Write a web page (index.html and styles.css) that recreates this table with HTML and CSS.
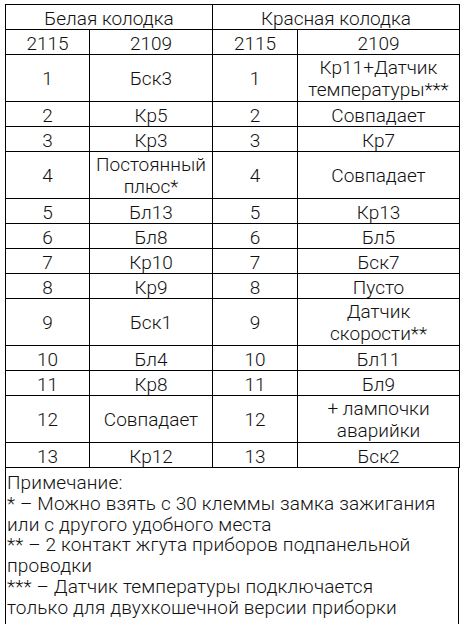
FILE: index.html
```html
<!DOCTYPE html>
<html lang="ru">
<head>
<meta charset="utf-8">
<title>Колодки 2115 / 2109</title>
<link rel="stylesheet" href="styles.css">
</head>
<body>
<div class="sheet">
  <table class="pins">
    <colgroup>
      <col class="c-a">
      <col class="c-b">
      <col class="c-c">
      <col class="c-d">
    </colgroup>
    <thead>
      <tr class="head">
        <th colspan="2">Белая колодка</th>
        <th colspan="2">Красная колодка</th>
      </tr>
      <tr class="head">
        <th>2115</th><th>2109</th><th>2115</th><th>2109</th>
      </tr>
    </thead>
    <tbody>
      <tr class="double"><td>1</td><td>Бск3</td><td>1</td><td>Кр11+Датчик<br>температуры***</td></tr>
      <tr class="single"><td>2</td><td>Кр5</td><td>2</td><td>Совпадает</td></tr>
      <tr class="single"><td>3</td><td>Кр3</td><td>3</td><td>Кр7</td></tr>
      <tr class="double"><td>4</td><td>Постоянный<br>плюс*</td><td>4</td><td>Совпадает</td></tr>
      <tr class="single"><td>5</td><td>Бл13</td><td>5</td><td>Кр13</td></tr>
      <tr class="single"><td>6</td><td>Бл8</td><td>6</td><td>Бл5</td></tr>
      <tr class="single"><td>7</td><td>Кр10</td><td>7</td><td>Бск7</td></tr>
      <tr class="single"><td>8</td><td>Кр9</td><td>8</td><td>Пусто</td></tr>
      <tr class="double"><td>9</td><td>Бск1</td><td>9</td><td>Датчик<br>скорости**</td></tr>
      <tr class="single"><td>10</td><td>Бл4</td><td>10</td><td>Бл11</td></tr>
      <tr class="single"><td>11</td><td>Кр8</td><td>11</td><td>Бл9</td></tr>
      <tr class="double"><td>12</td><td>Совпадает</td><td>12</td><td>+ лампочки<br>аварийки</td></tr>
      <tr class="single"><td>13</td><td>Кр12</td><td>13</td><td>Бск2</td></tr>
    </tbody>
  </table>
  <div class="notes">
    <p>Примечание:<br>
    * – Можно взять с 30 клеммы замка зажигания<br>
    или с другого удобного места<br>
    ** – 2 контакт жгута приборов подпанельной<br>
    проводки<br>
    *** – Датчик температуры подключается<br>
    только для двухкошечной версии приборки</p>
  </div>
</div>
</body>
</html>
```

FILE: styles.css
```css
html, body {
  margin: 0;
  padding: 0;
  background: #ffffff;
}

body {
  font-family: Roboto, "Liberation Sans", "DejaVu Sans", sans-serif;
  font-weight: 300;
  font-size: 19px;
  color: #111111;
}

.sheet {
  padding: 4px 0 0 5px;
  width: 454px;
}

.pins {
  width: 454px;
  border-collapse: collapse;
  table-layout: fixed;
}

.c-a { width: 84px; }
.c-b { width: 123px; }
.c-c { width: 85px; }
.c-d { width: 162px; }

.pins th,
.pins td {
  border: 1px solid #000000;
  padding: 4px 0 0;
  line-height: 20px;
  text-align: center;
  vertical-align: middle;
  font-weight: 300;
  white-space: nowrap;
}

.head { height: 25px; }
.single { height: 24px; }
.double { height: 47px; }

.double td {
  padding-top: 2px;
  line-height: 22px;
}

.notes {
  border: 1px solid #000000;
  border-top: none;
  height: 159px;
  box-sizing: border-box;
  padding: 5px 0 0 1px;
}

.notes p {
  margin: 0;
  line-height: 20.8px;
  letter-spacing: 0.15px;
}
```
